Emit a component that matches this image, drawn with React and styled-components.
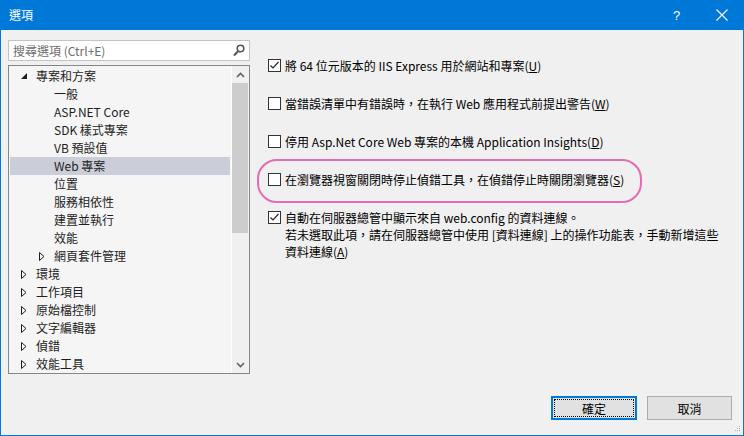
import React from 'react';
import styled, { createGlobalStyle } from 'styled-components';

const Global = createGlobalStyle`
  html, body { margin: 0; padding: 0; background: #f0f0f0; }
  body { font-family: "Noto Sans CJK TC", "Noto Sans", sans-serif; font-size: 12px; }
  * { box-sizing: border-box; }
`;

const Window = styled.div`
  position: relative;
  width: 744px;
  height: 436px;
  display: flex;
  flex-direction: column;
  background: #f0f0f0;
  border: 1px solid #0078d7;
  border-top: none;
  overflow: hidden;
`;

const TitleBar = styled.div`
  height: 30px;
  flex: none;
  display: flex;
  align-items: center;
  background: #0078d7;
  color: #fff;
  padding-left: 9px;
  margin: 0 -1px;
`;

const Title = styled.div`
  flex: 1;
  font-size: 12px;
  line-height: 16px;
`;

const TitleButton = styled.div`
  width: 45px;
  height: 30px;
  display: flex;
  align-items: center;
  justify-content: center;
  color: #fff;
  font-family: "Liberation Sans", sans-serif;
  font-size: 13px;
`;

const Main = styled.div`
  flex: 1;
  display: flex;
  padding: 10px 7px 0 7px;
`;

const LeftPane = styled.div`
  width: 242px;
  flex: none;
  display: flex;
  flex-direction: column;
  gap: 4px;
`;

const Search = styled.div`
  height: 21px;
  background: #fff;
  border: 1px solid #c4c4c4;
  display: flex;
  align-items: center;
  padding: 0 4px 0 4px;
  color: #6d6d6d;
  line-height: 17px;
`;

const SearchText = styled.span`
  flex: 1;
`;

const Tree = styled.div`
  height: 309px;
  border: 1px solid #828790;
  background: #f5f5f5;
  display: flex;
`;

const List = styled.div`
  flex: 1;
  padding: 1px;
`;

const Row = styled.div`
  height: 18px;
  display: flex;
  align-items: center;
  padding-left: ${p => 10 + p.$level * 18}px;
  background: ${p => (p.$selected ? '#cbcdd8' : 'transparent')};
  color: #1e1e1e;
  line-height: 18px;
  white-space: nowrap;
`;

const Arrow = styled.span`
  width: 16px;
  height: 18px;
  flex: none;
  display: flex;
  align-items: center;
  padding-left: 1px;
`;

const Scrollbar = styled.div`
  width: 18px;
  flex: none;
  border-left: 1px solid #fff;
  background: #f0f0f0;
  display: flex;
  flex-direction: column;
`;

const ScrollButton = styled.div`
  height: 17px;
  display: flex;
  align-items: center;
  justify-content: center;
`;

const Track = styled.div`
  flex: 1;
  padding: 0 1px 0 0;
`;

const Thumb = styled.div`
  height: 150px;
  background: #cdcdcd;
`;

const RightPane = styled.div`
  flex: 1;
  margin-left: 18px;
  padding-top: 17px;
  display: flex;
  flex-direction: column;
  gap: 21px;
`;

const Option = styled.label`
  position: relative;
  display: flex;
  align-items: flex-start;
  gap: 4px;
  line-height: 17px;
  color: #000;
  white-space: nowrap;
  ${p => p.$marked && `
    &::after {
      content: '';
      position: absolute;
      left: -11px;
      top: -12px;
      width: 381px;
      height: 40px;
      border: 2px solid #e66bb0;
      border-radius: 20px;
      pointer-events: none;
    }
  `}
`;

const Box = styled.span`
  width: 13px;
  height: 13px;
  flex: none;
  margin-top: 2px;
  border: 1px solid #333;
  background: #fff;
  display: flex;
  align-items: center;
  justify-content: center;
`;

const Footer = styled.div`
  flex: none;
  display: flex;
  justify-content: flex-end;
  gap: 10px;
  padding: 0 11px 15px 0;
`;

const Button = styled.button`
  position: relative;
  width: ${p => p.$w}px;
  height: 24px;
  padding: 0;
  font-family: inherit;
  font-size: 12px;
  color: #000;
  background: #e1e1e1;
  border: ${p => (p.$default ? '2px solid #0078d7' : '1px solid #adadad')};
  display: flex;
  align-items: center;
  justify-content: center;
  ${p => p.$default && `
    &::after {
      content: '';
      position: absolute;
      inset: 1px;
      border: 1px dotted #000;
    }
  `}
`;

const Grip = styled.svg`
  position: absolute;
  right: 2px;
  bottom: 2px;
`;

const Expanded = () => (
  <svg width="6" height="6" viewBox="0 0 6 6"><path d="M6 0 L6 6 L0 6 Z" fill="#1e1e1e" /></svg>
);
const Collapsed = () => (
  <svg width="6" height="9" viewBox="0 0 6 9"><path d="M0.5 0.5 L5 4.5 L0.5 8.5 Z" fill="none" stroke="#1e1e1e" strokeWidth="1" /></svg>
);

const Check = () => (
  <svg width="11" height="11" viewBox="0 0 11 11"><path d="M1.5 5.5 L4 8 L9.5 2" fill="none" stroke="#222" strokeWidth="1.2" /></svg>
);

const tree = [
  { label: '專案和方案', level: 0, arrow: 'e' },
  { label: '一般', level: 1 },
  { label: 'ASP.NET Core', level: 1 },
  { label: 'SDK 樣式專案', level: 1 },
  { label: 'VB 預設值', level: 1 },
  { label: 'Web 專案', level: 1, selected: true },
  { label: '位置', level: 1 },
  { label: '服務相依性', level: 1 },
  { label: '建置並執行', level: 1 },
  { label: '效能', level: 1 },
  { label: '網頁套件管理', level: 1, arrow: 'c' },
  { label: '環境', level: 0, arrow: 'c' },
  { label: '工作項目', level: 0, arrow: 'c' },
  { label: '原始檔控制', level: 0, arrow: 'c' },
  { label: '文字編輯器', level: 0, arrow: 'c' },
  { label: '偵錯', level: 0, arrow: 'c' },
  { label: '效能工具', level: 0, arrow: 'c' },
];

export default function App() {
  return (
    <>
      <Global />
      <Window>
        <TitleBar>
          <Title>選項</Title>
          <TitleButton>?</TitleButton>
          <TitleButton>
            <svg width="12" height="12" viewBox="0 0 12 12">
              <path d="M0.5 0.5 L11.5 11.5 M11.5 0.5 L0.5 11.5" stroke="#fff" strokeWidth="1.1" />
            </svg>
          </TitleButton>
        </TitleBar>
        <Main>
          <LeftPane>
            <Search>
              <SearchText>搜尋選項 (Ctrl+E)</SearchText>
              <svg width="12" height="13" viewBox="0 0 12 13">
                <circle cx="7.5" cy="4.5" r="3.3" fill="none" stroke="#555" strokeWidth="1.6" />
                <path d="M5.2 7 L1 11.5" stroke="#555" strokeWidth="2" />
              </svg>
            </Search>
            <Tree>
              <List>
                {tree.map(t => (
                  <Row key={t.label} $level={t.level} $selected={t.selected}>
                    <Arrow>{t.arrow === 'e' ? <Expanded /> : t.arrow === 'c' ? <Collapsed /> : null}</Arrow>
                    {t.label}
                  </Row>
                ))}
              </List>
              <Scrollbar>
                <ScrollButton>
                  <svg width="9" height="6" viewBox="0 0 9 6"><path d="M1 5 L4.5 1.5 L8 5" fill="none" stroke="#606060" strokeWidth="1.6" /></svg>
                </ScrollButton>
                <Track><Thumb /></Track>
                <ScrollButton>
                  <svg width="9" height="6" viewBox="0 0 9 6"><path d="M1 1 L4.5 4.5 L8 1" fill="none" stroke="#606060" strokeWidth="1.6" /></svg>
                </ScrollButton>
              </Scrollbar>
            </Tree>
          </LeftPane>
          <RightPane>
            <Option>
              <Box><Check /></Box>
              <span>將 64 位元版本的 IIS Express 用於網站和專案(<u>U</u>)</span>
            </Option>
            <Option>
              <Box />
              <span>當錯誤清單中有錯誤時，在執行 Web 應用程式前提出警告(<u>W</u>)</span>
            </Option>
            <Option>
              <Box />
              <span>停用 Asp.Net Core Web 專案的本機 Application Insights(<u>D</u>)</span>
            </Option>
            <Option $marked>
              <Box />
              <span>在瀏覽器視窗關閉時停止偵錯工具，在偵錯停止時關閉瀏覽器(<u>S</u>)</span>
            </Option>
            <Option>
              <Box><Check /></Box>
              <span>
                自動在伺服器總管中顯示來自 web.config 的資料連線。<br />
                若未選取此項，請在伺服器總管中使用 [資料連線] 上的操作功能表，手動新增這些<br />
                資料連線(<u>A</u>)
              </span>
            </Option>
          </RightPane>
        </Main>
        <Footer>
          <Button $default $w={86}>確定</Button>
          <Button $w={85}>取消</Button>
        </Footer>
        <Grip width="7" height="7" viewBox="0 0 7 7">
          <rect x="5" y="0" width="1" height="1" fill="#b0b0b0" />
          <rect x="3" y="2" width="1" height="1" fill="#b0b0b0" />
          <rect x="5" y="2" width="1" height="1" fill="#b0b0b0" />
          <rect x="1" y="4" width="1" height="1" fill="#b0b0b0" />
          <rect x="3" y="4" width="1" height="1" fill="#b0b0b0" />
          <rect x="5" y="4" width="1" height="1" fill="#b0b0b0" />
        </Grip>
      </Window>
    </>
  );
}
